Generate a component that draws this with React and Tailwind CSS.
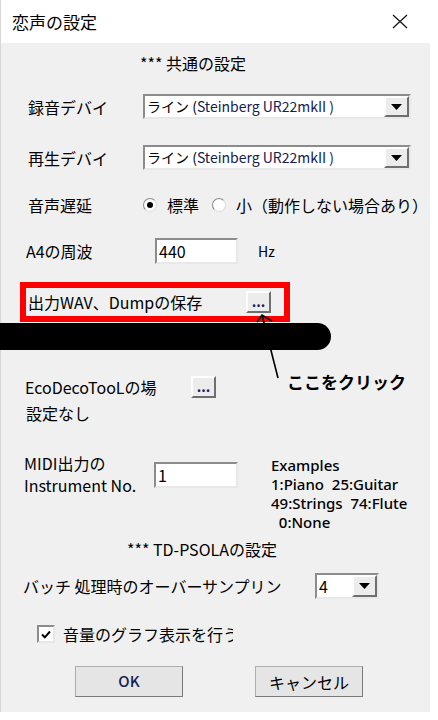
import React from 'react';

const sunken =
  'border-2 border-t-[#8c8c8c] border-l-[#8c8c8c] border-b-[#e8e8e8] border-r-[#e8e8e8] bg-white';
const raised =
  'border-2 border-t-[#fdfdfd] border-l-[#fdfdfd] border-b-[#6f6f6f] border-r-[#6f6f6f] bg-[#ececec]';

function DownArrow() {
  return (
    <svg width="11" height="6" viewBox="0 0 11 6">
      <path d="M0 0h11L5.5 6z" fill="#000" />
    </svg>
  );
}

function Combo({ width, children }) {
  return (
    <div className={`${sunken} ${width} h-full flex items-stretch`}>
      <div className="flex-1 flex items-center pl-[2px] whitespace-nowrap overflow-hidden">{children}</div>
      <div className={`${raised} w-[25px] flex items-center justify-center`}>
        <DownArrow />
      </div>
    </div>
  );
}

function Radio({ checked }) {
  return (
    <span className="w-[14px] h-[14px] rounded-full border border-t-[#8a8a8a] border-l-[#8a8a8a] border-b-[#dcdcdc] border-r-[#dcdcdc] bg-white flex items-center justify-center">
      {checked && <span className="w-[6px] h-[6px] rounded-full bg-black" />}
    </span>
  );
}

function DotsButton() {
  return (
    <button className={`${raised} w-[25px] h-[22px] flex items-end justify-center pb-[3px] text-[14px] font-bold leading-none text-[#1a2458]`}>
      ...
    </button>
  );
}

export default function App() {
  return (
    <div className="relative w-[438px] h-[720px] bg-white text-black text-[16px] font-['Noto_Sans_CJK_JP','Noto_Sans',sans-serif]">
      <div className="w-[430px] border-l border-[#d6d6d6]">
        {/* title bar */}
        <div className="h-[43px] bg-white flex items-center justify-between pl-[11px] pr-[22px]">
          <span className="text-[17px]">恋声の設定</span>
          <svg width="16" height="15" viewBox="0 0 16 15">
            <path d="M1 1L15 14M15 1L1 14" stroke="#111" strokeWidth="1.2" />
          </svg>
        </div>

        <div className="bg-[#f0f0f0] h-[669px] flex flex-col pt-[8px]">
          <div className="h-[24px] flex items-center pl-[139px] whitespace-nowrap">*** 共通の設定</div>

          <div className="mt-[19px] h-[25px] flex items-center">
            <span className="w-[142px] pl-[27px]">録音デバイ</span>
            <Combo width="w-[268px]">
              <span className="text-[14px]">
                ライン (<span className="text-[#14204e]">Steinberg UR22mkII )</span>
              </span>
            </Combo>
          </div>

          <div className="mt-[26px] h-[25px] flex items-center">
            <span className="w-[142px] pl-[27px]">再生デバイ</span>
            <Combo width="w-[268px]">
              <span className="text-[14px]">
                ライン (<span className="text-[#14204e]">Steinberg UR22mkII )</span>
              </span>
            </Combo>
          </div>

          <div className="mt-[23px] h-[24px] flex items-center whitespace-nowrap">
            <span className="w-[142px] pl-[27px]">音声遅延</span>
            <Radio checked />
            <span className="ml-[10px]">標準</span>
            <span className="ml-[13px]">
              <Radio />
            </span>
            <span className="ml-[10px]">小（動作しない場合あり）</span>
          </div>

          <div className="mt-[21px] h-[26px] flex items-center">
            <span className="w-[154px] pl-[25px]">A4の周波</span>
            <div className={`${sunken} w-[83px] h-full flex items-center pl-[2px]`}>440</div>
            <span className="ml-[20px] text-[14px]">Hz</span>
          </div>

          {/* highlighted save row */}
          <div className="mt-[18px] ml-[19px] w-[270px] h-[40px] border-[6px] border-[#ff0000] flex items-center">
            <span className="w-[220px] pl-[2px] whitespace-nowrap">出力WAV、Dumpの保存</span>
            <DotsButton />
          </div>

          <div className="mt-[1px] -ml-px w-[331px] h-[27px] bg-black rounded-r-full" />

          <div className="mt-[24px] h-[26px] flex items-center">
            <span className="w-[190px] pl-[24px] whitespace-nowrap">EcoDecoTooLの場</span>
            <DotsButton />
          </div>
          <div className="mt-[2px] h-[22px] flex items-center pl-[25px]">設定なし</div>

          <div className="mt-[28px] flex items-start">
            <div className="w-[153px] pl-[23px] leading-[22px]">
              <div>MIDI出力の</div>
              <div>Instrument No.</div>
            </div>
            <div className={`${sunken} mt-[10px] w-[84px] h-[26px] flex items-center pl-[2px]`}>1</div>
            <div className="ml-[33px] mt-[4px] text-[15px] font-medium leading-[19px] whitespace-pre font-['Noto_Sans','Noto_Sans_CJK_JP',sans-serif]">
              <div>Examples</div>
              <div>1:Piano  25:Guitar</div>
              <div>49:Strings  74:Flute</div>
              <div>  0:None</div>
            </div>
          </div>

          <div className="mt-[6px] h-[22px] flex items-center pl-[126px] whitespace-nowrap">*** TD-PSOLAの設定</div>

          <div className="mt-[13px] h-[26px] flex items-center">
            <span className="w-[314px] pl-[22px] whitespace-nowrap">バッチ 処理時のオーバーサンプリン</span>
            <Combo width="w-[64px]">4</Combo>
          </div>

          <div className="mt-[24px] h-[22px] flex items-center pl-[36px]">
            <span className={`${sunken} w-[18px] h-[18px] flex items-center justify-center`}>
              <svg width="10" height="9" viewBox="0 0 10 9">
                <path d="M1 4.5L3.8 7.3L9 1.5" fill="none" stroke="#000" strokeWidth="2" />
              </svg>
            </span>
            <span className="ml-[8px] w-[170px] overflow-hidden whitespace-nowrap">音量のグラフ表示を行う</span>
          </div>

          <div className="mt-[21px] h-[31px] flex items-stretch">
            <button className="ml-[74px] w-[108px] border border-[#adadad] border-b-[#7a7a7a] border-r-[#7a7a7a] bg-[#e5e5e5] text-[15px] font-medium text-[#14204e]">
              OK
            </button>
            <button className="ml-[72px] w-[108px] border border-[#adadad] border-b-[#7a7a7a] border-r-[#7a7a7a] bg-[#e5e5e5]">
              キャンセル
            </button>
          </div>
        </div>
      </div>

      {/* pointer note */}
      <svg className="absolute left-[250px] top-[310px]" width="40" height="72" viewBox="0 0 40 72">
        <path d="M12 5L28 68" stroke="#000" strokeWidth="1.6" fill="none" />
        <path d="M7 12L12 5L22 11" stroke="#000" strokeWidth="1.6" fill="none" />
      </svg>
      <span className="absolute left-[287px] top-[368px] text-[17px] font-bold leading-[28px] whitespace-nowrap">
        ここをクリック
      </span>
    </div>
  );
}
